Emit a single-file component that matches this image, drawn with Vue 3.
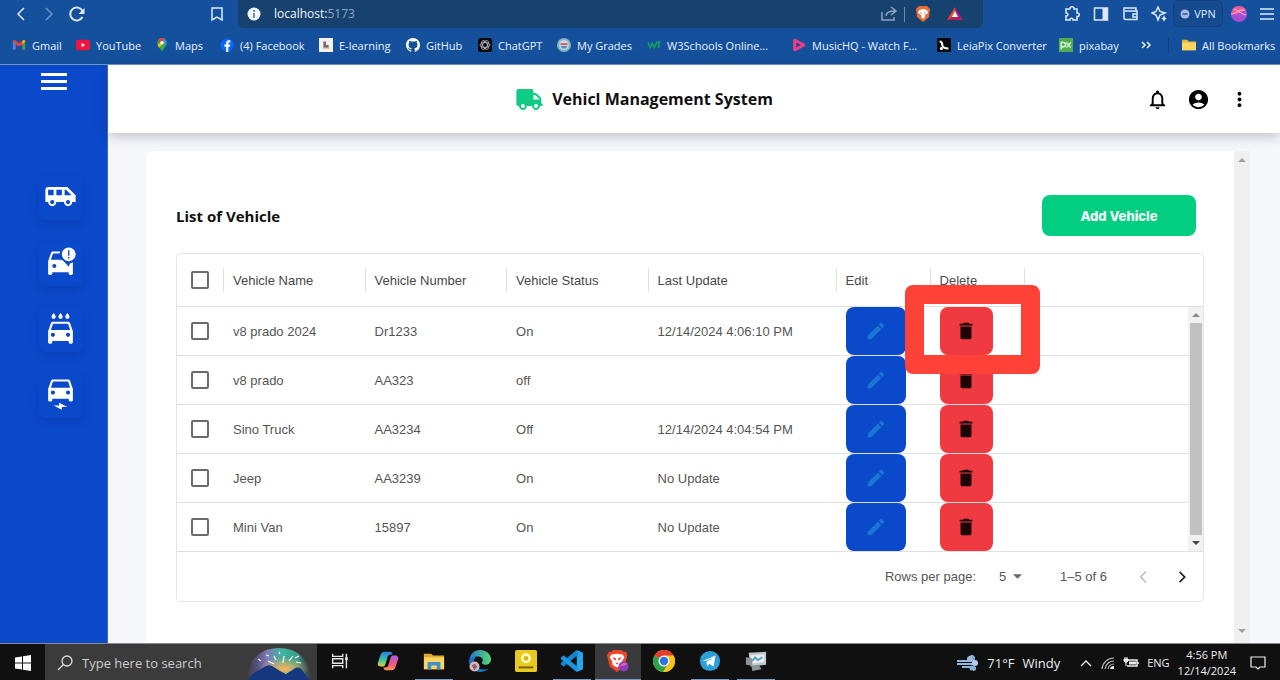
<script setup>
import { ref } from 'vue'

const bookmarks = [
  { label: 'Gmail', icon: '<path d="M1 3v10h3V7l4 3 4-3v6h3V3l-2-1-5 4-5-4z" fill="#ea4335"/><path d="M1 4v9h3V6z" fill="#4285f4"/><path d="M12 6v7h3V4z" fill="#34a853"/><path d="M12 3l2-1 1 2-3 3z" fill="#fbbc04"/>' },
  { label: 'YouTube', icon: '<rect x="0" y="2" width="16" height="12" rx="3" fill="#f0143c"/><path d="M6.500 5.500v5l4-2.500z" fill="#fff"/>' },
  { label: 'Maps', icon: '<path d="M8 0a5.500 5.500 0 0 0-5.500 5.500C2.500 9.500 6 11 8 16c2-5 5.500-6.500 5.500-10.500A5.500 5.500 0 0 0 8 0z" fill="#34a853"/><path d="M8 0a5.500 5.500 0 0 0-4.500 2.300L6.500 5 11 1c-1-.7-2-1-3-1z" fill="#ea4335"/><path d="M11 1L6 6l4 1 3.300-3C12.800 2.500 12 1.500 11 1z" fill="#4285f4"/><path d="M3 8l3-3 2 3-3.500 3z" fill="#fbbc04"/><circle cx="8" cy="5.500" r="2" fill="#fff"/>' },
  { label: '(4) Facebook', icon: '<circle cx="8" cy="8" r="7.500" fill="#0866ff"/><path d="M7 16v-6H5V7.500h2V6c0-2.200 1.200-3.300 3.300-3.300h1.500V5h-1.200C9.700 5 9.500 5.400 9.500 6.200v1.300h2.300l-.4 2.500H9.500v6z" fill="#fff"/>' },
  { label: 'E-learning', icon: '<path d="M0 0h16v16H0z" fill="#f4f2ee"/><path d="M5 4h3v4h3v3H5z" fill="#726b74"/><path d="M5 11h7v1H5z" fill="#c8a05a"/>' },
  { label: 'GitHub', icon: '<path fill="#fff" d="M8 0C3.580 0 0 3.580 0 8c0 3.540 2.290 6.530 5.470 7.590.4.070.55-.17.55-.38 0-.19-.01-.82-.01-1.490-2.010.37-2.530-.49-2.690-.94-.09-.23-.48-.94-.82-1.130-.28-.15-.68-.52-.01-.53.63-.01 1.080.58 1.230.82.72 1.210 1.870.87 2.330.66.070-.52.28-.87.51-1.070-1.780-.2-3.640-.89-3.640-3.950 0-.87.31-1.590.82-2.150-.08-.2-.36-1.020.08-2.120 0 0 .67-.21 2.200.82a7.600 7.600 0 0 1 4 0c1.530-1.040 2.200-.82 2.200-.82.44 1.100.16 1.920.08 2.120.51.56.82 1.270.82 2.150 0 3.070-1.870 3.750-3.650 3.950.29.25.54.73.54 1.480 0 1.070-.01 1.930-.01 2.200 0 .21.15.46.55.38A8 8 0 0 0 16 8c0-4.420-3.580-8-8-8z"/>' },
  { label: 'ChatGPT', icon: '<rect width="16" height="16" rx="3" fill="#080a10"/><g fill="none" stroke="#c9c9c9" stroke-width=".9"><ellipse cx="8" cy="8" rx="5.600" ry="2.700"/><ellipse cx="8" cy="8" rx="5.600" ry="2.700" transform="rotate(60 8 8)"/><ellipse cx="8" cy="8" rx="5.600" ry="2.700" transform="rotate(120 8 8)"/></g>' },
  { label: 'My Grades', icon: '<circle cx="8" cy="8" r="8" fill="#7fb7c9"/><circle cx="8" cy="8" r="5.500" fill="#d8d6dc"/><path d="M4 6h8v2H4z" fill="#c9566a"/><path d="M4 9h8l-2 3H6z" fill="#4f8fb5"/>' },
  { label: 'W3Schools Online...', icon: '<path d="M1 5l2.500 6L6 6l2.500 5L11 5M11 5l3.500-.5-1.500 3 1 2-2 1.500" fill="none" stroke="#139e62" stroke-width="1.800"/>' },
  { label: 'MusicHQ - Watch F...', icon: '<path d="M3 2.500v11L13.500 8z" fill="none" stroke="#ea3f86" stroke-width="3.400" stroke-linejoin="round"/><path d="M6 6v4l4-2z" fill="#5b2c87"/>' },
  { label: 'LeiaPix Converter', icon: '<rect width="16" height="16" rx="1" fill="#050608"/><path d="M3 4c3 0 3 2 3 4s2 4 7 4" fill="none" stroke="#fff" stroke-width="2.400"/><circle cx="5" cy="12" r="1.800" fill="#fff"/>' },
  { label: 'pixabay', icon: '<path d="M0 0h16v16H0z" fill="#4faf50"/><path d="M2.500 13V5H5a2.500 2.500 0 0 1 0 5H2.500M8.500 5l5 6M13.500 5l-5 6" fill="none" stroke="#e8ffe6" stroke-width="1.500"/>' }
]

const navItems = [
  { label: 'Vehicles', d: 'M17 5H3c-1.100 0-2 .89-2 2v9h2c0 1.650 1.340 3 3 3s3-1.350 3-3h5.500c0 1.650 1.340 3 3 3s3-1.350 3-3H23v-5l-6-6zM3 11V7h4v4H3zm3 6.500c-.83 0-1.500-.67-1.500-1.500s.67-1.500 1.500-1.500 1.500.67 1.500 1.500-.67 1.500-1.500 1.500zm7-6.500H9V7h4v4zm4.500 6.500c-.83 0-1.500-.67-1.500-1.500s.67-1.500 1.500-1.500 1.500.67 1.500 1.500-.67 1.500-1.500 1.500zM15 11V7h1l4 4h-5z' },
  { label: 'Accidents', d: 'M18 1c-2.760 0-5 2.240-5 5s2.240 5 5 5 5-2.240 5-5-2.240-5-5-5zm.5 8h-1V8h1v1zm0-2h-1V3h1v4zM12 4H6.500c-.66 0-1.210.42-1.420 1.010L3 11v9c0 .55.45 1 1 1h1c.55 0 1-.45 1-1v-1h12v1c0 .55.45 1 1 1h1c.55 0 1-.45 1-1v-8l-2 .6-1 2.400-4-4.200-2-.8H5l1.500-4.500h4.600L12 4zM7.500 16a1.500 1.500 0 1 1 0-3 1.500 1.500 0 0 1 0 3z' },
  { label: 'Car wash', d: 'M17 5c.83 0 1.500-.67 1.500-1.500 0-1-1.500-2.700-1.500-2.700s-1.500 1.700-1.500 2.700c0 .83.67 1.500 1.500 1.500zm-5 0c.83 0 1.500-.67 1.500-1.500 0-1-1.500-2.700-1.500-2.700s-1.500 1.700-1.500 2.700c0 .83.67 1.500 1.500 1.500zM7 5c.83 0 1.500-.67 1.500-1.500C8.500 2.500 7 .8 7 .8S5.500 2.500 5.500 3.500C5.500 4.330 6.170 5 7 5zm11.920 3.010C18.720 7.420 18.160 7 17.500 7h-11c-.66 0-1.210.42-1.420 1.010L3 14v8c0 .55.45 1 1 1h1c.55 0 1-.45 1-1v-1h12v1c0 .55.45 1 1 1h1c.55 0 1-.45 1-1v-8l-2.080-5.990zM6.500 18c-.83 0-1.500-.67-1.500-1.500S5.670 15 6.500 15s1.500.67 1.500 1.500S7.330 18 6.500 18zm11 0c-.83 0-1.500-.67-1.500-1.500s.67-1.500 1.500-1.500 1.500.67 1.500 1.500-.67 1.500-1.500 1.500zM5 13l1.500-4.500h11L19 13H5z' },
  { label: 'Electric cars', d: 'M18.920 2.010C18.720 1.420 18.160 1 17.500 1h-11c-.66 0-1.210.42-1.420 1.010L3 8v8c0 .55.45 1 1 1h1c.55 0 1-.45 1-1v-1h12v1c0 .55.45 1 1 1h1c.55 0 1-.45 1-1V8l-2.080-5.990zM6.500 12c-.83 0-1.500-.67-1.500-1.500S5.670 9 6.500 9 8 9.670 8 10.500 7.330 12 6.500 12zm11 0c-.83 0-1.500-.67-1.500-1.500S16.670 9 17.500 9s1.500.67 1.500 1.500-.67 1.500-1.500 1.500zM5 7l1.500-4.500h11L19 7H5zM7 20h4v-2l6 3h-4v2z' }
]

const columns = ['Vehicle Name', 'Vehicle Number', 'Vehicle Status', 'Last Update', 'Edit', 'Delete']
const vehicles = [
  { name: 'v8 prado 2024', number: 'Dr1233', status: 'On', updated: '12/14/2024 4:06:10 PM', marked: true },
  { name: 'v8 prado', number: 'AA323', status: 'off', updated: '' },
  { name: 'Sino Truck', number: 'AA3234', status: 'Off', updated: '12/14/2024 4:04:54 PM' },
  { name: 'Jeep', number: 'AA3239', status: 'On', updated: 'No Update' },
  { name: 'Mini Van', number: '15897', status: 'On', updated: 'No Update' }
]
const pageSize = ref(5)

const taskApps = [
  { label: 'Task view', icon: '<g fill="none" stroke="#e6e6e6" stroke-width="1.500"><path d="M4 4v3h11V4M4 20v-3h11v3M4 9.500h11v5H4zM19 4v16"/></g><path d="M17.500 8h3v3h-3z" fill="#e6e6e6"/>' },
  { label: 'Copilot', icon: '<defs><linearGradient id="cpa" x1="0" y1="0" x2="0" y2="1"><stop offset="0" stop-color="#2b7bea"/><stop offset=".6" stop-color="#3ecf9a"/><stop offset="1" stop-color="#f2c531"/></linearGradient><linearGradient id="cpb" x1="0" y1="0" x2="0" y2="1"><stop offset="0" stop-color="#b05be8"/><stop offset=".6" stop-color="#f0567f"/><stop offset="1" stop-color="#f79a4a"/></linearGradient></defs><path d="M8 2h6c2 0 2.500 1.500 3 3h-2c-2 0-3 1-3.500 3L9 16c-.5 1.500-1.500 2-3 2H4c-3 0-3.500-2-3-4l3-9c.7-2 2-3 4-3z" fill="url(#cpa)"/><path d="M16 22h-6c-2 0-2.500-1.500-3-3h2c2 0 3-1 3.500-3L15 8c.5-1.500 1.500-2 3-2h2c3 0 3.500 2 3 4l-3 9c-.7 2-2 3-4 3z" fill="url(#cpb)"/>' },
  { label: 'File Explorer', running: true, icon: '<path d="M1 4h8l2 2h12v15H1z" fill="#e0a92e"/><path d="M1 8h22v13H1z" fill="#fbd462"/><path d="M5 13h14v8h-4v-4H9v4H5z" fill="#3f8fc9"/>' },
  { label: 'Edge', icon: '<defs><linearGradient id="edg" x1="0" y1="0" x2="1" y2="0"><stop offset="0" stop-color="#1c78d4"/><stop offset="1" stop-color="#59d96c"/></linearGradient></defs><path d="M0 12C1 4 6 0 12 0c7 0 12 5 12 10 0 4-3 6-6 6-3 0-4-1-4-2s1-1 1-3c0-2-2-4-5-4C5 7 1 9 0 12z" fill="url(#edg)"/><path d="M0 12c1-3 4-5 8-5-2 2-3 4-3 7 1 5 6 8 13 7 2 0 3-1 4-2-2 3-6 5-10 5C5 24 0 18 0 12z" fill="#1674c8"/><circle cx="6" cy="18" r="5.500" fill="#d9b6b4"/><path d="M3 17l3-2 3 3-3 4z" fill="#8f5a68"/>' },
  { label: 'Player', icon: '<rect width="24" height="24" rx="2" fill="#e9c91c"/><circle cx="12" cy="9" r="5.500" fill="#fff6c4"/><circle cx="12" cy="9" r="2.500" fill="#d8b400"/><path d="M4 18h16v2H4z" fill="#6b5900"/>' },
  { label: 'Visual Studio Code', running: true, icon: '<path d="M17 0l7 3v18l-7 3z" fill="#28a4ec"/><path d="M17 0l2 5L3 18l-3-2v-2z" fill="#1685d0"/><path d="M17 24l2-5L3 6 0 8v2z" fill="#1b95dd"/><path d="M17 8v8l-5-4z" fill="#121212"/>' },
  { label: 'Brave', running: true, active: true, icon: '<path d="M7 0h9l2 2 3 0 1 4-3 12-8 6-8-6L0 6l2-4 3 0z" fill="#f0452b"/><path d="M5 5l6-1 6 1 2 3-3 5 0 3-5 3-5-3 0-3-3-5z" fill="#fff"/><path d="M6 8l4 1-1 3zM16 8l-4 1 1 3zM9 14h4l-2 2z" fill="#f0452b"/><circle cx="18" cy="18" r="5.500" fill="#8a3fc4"/><path d="M13 18l5-4 5 1-4 2z" fill="#ee5f9b"/>' },
  { label: 'Chrome', icon: '<circle cx="12" cy="12" r="12" fill="#fbc116"/><path d="M12 12L1.600 6A12 12 0 0 1 22.400 6z" fill="#e33b2e"/><path d="M12 12L1.600 6A12 12 0 0 0 11 24l6-10z" fill="#2ba24c"/><path d="M12 6h10.400A12 12 0 0 1 11 24l6.500-9z" fill="#fbc116"/><circle cx="12" cy="12" r="6" fill="#fff"/><circle cx="12" cy="12" r="4.600" fill="#2f73e0"/>' },
  { label: 'Telegram', running: true, icon: '<circle cx="12" cy="12" r="11" fill="#2c9fd8"/><path d="M4 12l14-6-2 12-5-3-2 3-1-5 8-5-9 4z" fill="#fff"/>' },
  { label: 'Device settings', running: true, icon: '<path d="M4 3l19-1v14l-17 2z" fill="#c3c8cc"/><path d="M6 6l15-1v8L8 15z" fill="#eceff1"/><path d="M8 12l3-4 3 3 5-3" stroke="#4b9fc6" stroke-width="2" fill="none"/><path d="M1 8l7 1v8l-7-1zM7 17l8-1 3 5-10 2z" fill="#8e959a"/>' }
]
</script>

<template>
  <div class="screen">
    <header class="browser">
      <div class="toolbar">
        <div class="nav-buttons">
          <button aria-label="Back"><svg class="i16" viewBox="0 0 16 16"><path class="line" d="M11 2L5 8l6 6" /></svg></button>
          <button class="faded" aria-label="Forward"><svg class="i16" viewBox="0 0 16 16"><path class="line" d="M5 2l6 6-6 6" /></svg></button>
          <button aria-label="Reload"><svg class="i16" viewBox="0 0 16 16"><path class="line bold" d="M13.500 11A6.500 6.500 0 1 1 13.500 5" /><path d="M15.500 2v6H9.500z" fill="currentColor" /></svg></button>
          <button class="save" aria-label="Bookmark this page"><svg class="i16" viewBox="0 0 16 16"><path class="line" d="M3 2h10v12l-5-3-5 3z" /></svg></button>
        </div>
        <div class="address">
          <svg class="i14" viewBox="0 0 14 14"><circle cx="7" cy="7" r="6.500" fill="#f3f8ff" /><path d="M7 6v5M7 3v2" stroke="#50709b" stroke-width="1.600" /></svg>
          <span class="url">localhost:<span class="port">5173</span></span>
          <button class="share" aria-label="Share"><svg class="i16" viewBox="0 0 16 16"><path class="line" d="M1 6v8h12v-3M5 10c0-4 3-5 9-5M10 1l5 4-5 4" /></svg></button>
          <i class="bar"></i>
          <button aria-label="Brave Shields"><svg class="i16" viewBox="0 0 16 16"><path d="M4 0h8l3 3-1 8-6 5-6-5-1-8z" fill="#ee6a36" /><path d="M4 4l4-1 4 1 1 3-3 2v2l-2 2-2-2V9L3 7z" fill="#fff" /><path d="M5 6l2 1-1 1zM11 6L9 7l1 1z" fill="#ee6a36" /></svg></button>
          <button class="bat" aria-label="Brave Rewards"><svg class="i16" viewBox="0 0 16 16"><path d="M8 1L0 14h8V9z" fill="#e84a2a" /><path d="M8 1l8 13H8z" fill="#9b2480" /><path d="M0 14h16l-5-3H5z" fill="#ba1c5c" /><path d="M8 5l3 6H5z" fill="#fff" /></svg></button>
        </div>
        <div class="tools">
          <button aria-label="Extensions"><svg class="i16" viewBox="0 0 16 16"><path class="line" d="M2 3h4c-.5-3 4.500-3 4 0h3v4c3-.5 3 4 0 3.500V14H9c.5-2.500-3.500-2.500-3 0H2v-4c2.500.5 2.500-3.500 0-3z" /></svg></button>
          <button aria-label="Sidebar"><svg class="i16" viewBox="0 0 16 16"><path class="line" d="M1.500 2h13v12h-13z" /><path d="M9.500 2h5v12h-5z" fill="currentColor" /></svg></button>
          <button aria-label="Wallet"><svg class="i16" viewBox="0 0 16 16"><path class="line" d="M14 5V2H2v10c0 1 .5 1.500 2 1.500h11V5H3M15 8h-4v3h4" /></svg></button>
          <button aria-label="Leo assistant"><svg class="i16" viewBox="0 0 16 16"><path class="line" d="M7 1l2 4.500L14 7 9 9l-2 5-2-5-4-2 4-1.500z" /><path d="M13 9l1 2.500 2 1-2 1-1 2.500-1-2.500-2-1 2-1z" fill="currentColor" /></svg></button>
          <button class="vpn"><svg class="i10" viewBox="0 0 10 10"><circle cx="5" cy="5" r="4.500" fill="#a9b9e0" /><path d="M2.500 5h5" stroke="#28518f" stroke-width="1.500" /></svg>VPN</button>
          <button class="profile" aria-label="Profile"><svg class="i16" viewBox="0 0 16 16"><circle cx="8" cy="8" r="8" fill="#a74dd4" /><path d="M.5 6A8 8 0 0 1 15 4L5 9z" fill="#ef5c91" /><path d="M0 8c5 0 8-5 14-4M3 3c4 1 5 4 12 6" stroke="#ffc0db" fill="none" /></svg></button>
          <button class="menu" aria-label="Browser menu"><svg class="i16" viewBox="0 0 16 16"><path class="line" d="M1 3h14M1 8h14M1 13h14" /></svg></button>
        </div>
      </div>
      <nav class="bookmarks" aria-label="Bookmarks">
        <a v-for="item in bookmarks" :key="item.label" href="#"><svg class="i14" viewBox="0 0 16 16" v-html="item.icon"></svg>{{ item.label }}</a>
        <button class="more" aria-label="More bookmarks"><svg class="i14" viewBox="0 0 14 14"><path class="line" d="M2 4l3 3-3 3M7 4l3 3-3 3" /></svg></button>
        <a class="all" href="#"><svg class="i14" viewBox="0 0 16 16"><path d="M0 2h6l2 2h8v10H0z" fill="#e9b53a" /><path d="M0 5h16v9H0z" fill="#ffd75e" /></svg>All Bookmarks</a>
      </nav>
    </header>

    <div class="app">
      <aside class="sidebar">
        <button class="burger" aria-label="Toggle menu"><svg viewBox="0 0 26 18"><path d="M0 0h26v3H0zM0 7h26v3H0zM0 14h26v3H0z" fill="currentColor" /></svg></button>
        <nav class="side-nav" aria-label="Main">
          <a v-for="item in navItems" :key="item.label" href="#" :aria-label="item.label"><svg viewBox="0 0 24 24"><path :d="item.d" fill="currentColor" fill-rule="evenodd" /></svg></a>
        </nav>
      </aside>

      <div class="page">
        <header class="topbar">
          <div class="brand">
            <svg viewBox="0 0 640 512"><path fill="#0fcb86" d="M624 352h-16V243.900c0-12.700-5.100-24.900-14.100-33.900L494 110.100c-9-9-21.200-14.100-33.900-14.100H416V48c0-26.500-21.500-48-48-48H48C21.500 0 0 21.500 0 48v320c0 26.500 21.500 48 48 48h16c0 53 43 96 96 96s96-43 96-96h128c0 53 43 96 96 96s96-43 96-96h48c8.800 0 16-7.200 16-16v-32c0-8.800-7.200-16-16-16zM160 464c-26.500 0-48-21.500-48-48s21.500-48 48-48 48 21.500 48 48-21.500 48-48 48zm320 0c-26.500 0-48-21.500-48-48s21.500-48 48-48 48 21.500 48 48-21.500 48-48 48zm80-208H416V144h44.100l99.900 99.900V256z" /></svg>
            <h1>Vehicl Management System</h1>
          </div>
          <div class="account">
            <button aria-label="Notifications"><svg viewBox="0 0 24 24"><path d="M12 22c1.100 0 2-.9 2-2h-4c0 1.100.9 2 2 2zm6-6v-5c0-3.070-1.630-5.640-4.500-6.320V4c0-.83-.67-1.500-1.500-1.500s-1.500.67-1.500 1.500v.68C7.640 5.360 6 7.920 6 11v5l-2 2v1h16v-1l-2-2zm-2 1H8v-6c0-2.480 1.510-4.500 4-4.500s4 2.020 4 4.500v6z" /></svg></button>
            <button aria-label="Account"><svg viewBox="0 0 24 24"><path d="M12 2C6.480 2 2 6.480 2 12s4.480 10 10 10 10-4.480 10-10S17.520 2 12 2zm0 4c1.930 0 3.500 1.570 3.500 3.500S13.930 13 12 13s-3.500-1.570-3.500-3.500S10.070 6 12 6zm0 14c-2.030 0-4.430-.82-6.140-2.880C7.550 15.800 9.680 15 12 15s4.450.8 6.140 2.120C16.430 19.180 14.030 20 12 20z" /></svg></button>
            <button aria-label="More options"><svg viewBox="0 0 24 24"><path d="M12 8c1.100 0 2-.9 2-2s-.9-2-2-2-2 .9-2 2 .9 2 2 2zm0 2c-1.100 0-2 .9-2 2s.9 2 2 2 2-.9 2-2-.9-2-2-2zm0 6c-1.100 0-2 .9-2 2s.9 2 2 2 2-.9 2-2-.9-2-2-2z" /></svg></button>
          </div>
        </header>

        <main class="content">
          <section class="card">
            <div class="card-head">
              <h2>List of Vehicle</h2>
              <button class="add">Add Vehicle</button>
            </div>

            <div class="grid">
              <div class="grid-body">
                <table>
                  <colgroup>
                    <col class="c-check"><col class="c-text"><col class="c-text"><col class="c-text"><col class="c-date"><col class="c-act"><col class="c-act"><col>
                  </colgroup>
                  <thead>
                    <tr>
                      <th><input type="checkbox" aria-label="Select all rows"></th>
                      <th v-for="c in columns" :key="c" scope="col"><span class="sep">{{ c }}</span></th>
                      <th><span class="sep end"></span></th>
                    </tr>
                  </thead>
                  <tbody>
                    <tr v-for="v in vehicles" :key="v.name">
                      <td><input type="checkbox" :aria-label="'Select ' + v.name"></td>
                      <td>{{ v.name }}</td>
                      <td>{{ v.number }}</td>
                      <td>{{ v.status }}</td>
                      <td>{{ v.updated }}</td>
                      <td><button class="edit" :aria-label="'Edit ' + v.name"><svg viewBox="0 0 24 24"><path d="M3 17.250V21h3.750L17.810 9.940l-3.750-3.750L3 17.250zM20.710 7.040c.39-.39.39-1.020 0-1.410l-2.340-2.340c-.39-.39-1.020-.39-1.410 0l-1.830 1.830 3.750 3.750 1.830-1.830z" /></svg></button></td>
                      <td class="delete-cell">
                        <button class="delete" :aria-label="'Delete ' + v.name"><svg viewBox="0 0 24 24"><path d="M6 19c0 1.100.9 2 2 2h8c1.100 0 2-.9 2-2V7H6v12zM19 4h-3.500l-1-1h-5l-1 1H5v2h14V4z" /></svg></button>
                        <i v-if="v.marked" class="marker"></i>
                      </td>
                      <td></td>
                    </tr>
                  </tbody>
                </table>
                <div class="rail">
                  <div class="rail-head"></div>
                  <div class="scroll">
                    <svg viewBox="0 0 8 8"><path d="M0 6l4-4 4 4z" fill="#8a8a8a" /></svg>
                    <div class="thumb"></div>
                    <svg viewBox="0 0 8 8"><path d="M0 2l4 4 4-4z" fill="#444" /></svg>
                  </div>
                </div>
              </div>
              <footer class="pager">
                <label for="page-size">Rows per page:</label>
                <span class="select">
                  <select id="page-size" v-model="pageSize"><option :value="5">5</option><option :value="10">10</option></select>
                  <svg viewBox="0 0 8 8"><path d="M0 2l4 4 4-4z" fill="#666" /></svg>
                </span>
                <span class="range">1–5 of 6</span>
                <button disabled aria-label="Previous page"><svg viewBox="0 0 24 24"><path d="M15.410 5.410L14 4l-8 8 8 8 1.410-1.410L8.830 12z" /></svg></button>
                <button aria-label="Next page"><svg viewBox="0 0 24 24"><path d="M8 6l1.600-1.600L17.200 12l-7.600 7.600L8 18l6-6z" /></svg></button>
              </footer>
            </div>
          </section>
          <div class="page-scroll">
            <svg viewBox="0 0 8 8"><path d="M0 6l4-4 4 4z" fill="#a0a0a0" /></svg>
            <svg viewBox="0 0 8 8"><path d="M0 2l4 4 4-4z" fill="#a0a0a0" /></svg>
          </div>
        </main>
      </div>
    </div>

    <footer class="taskbar">
      <button class="start" aria-label="Start"><svg class="i16" viewBox="0 0 16 16"><path d="M0 2.500L7 1.500v6H0zM8 1.300L16 0v7.500H8zM0 8.500h7v6l-7-1zM8 8.500h8V16l-8-1.300z" fill="#fff" /></svg></button>
      <label class="search">
        <svg class="i16" viewBox="0 0 16 16"><circle cx="10" cy="6" r="5" fill="none" stroke="#ddd" stroke-width="1.300" /><path d="M6.500 9.500L1 15" stroke="#ddd" stroke-width="1.300" /></svg>
        <input type="text" placeholder="Type here to search" aria-label="Search">
        <svg class="scene" viewBox="0 0 66 34">
          <defs>
            <linearGradient id="sky" x1="0" y1="0" x2="1" y2="0"><stop offset="0" stop-color="#4a4580" stop-opacity=".3" /><stop offset=".3" stop-color="#8078b8" /><stop offset=".55" stop-color="#3fb59c" /><stop offset=".8" stop-color="#3a9c8c" /><stop offset="1" stop-color="#3c4b55" stop-opacity=".3" /></linearGradient>
            <radialGradient id="glow"><stop offset="0" stop-color="#ffb35c" /><stop offset="1" stop-color="#ffb35c" stop-opacity="0" /></radialGradient>
          </defs>
          <path d="M2 34C0 14 14 1 33 1s33 13 31 33z" fill="url(#sky)" />
          <ellipse cx="38" cy="22" rx="25" ry="12" fill="url(#glow)" />
          <path d="M0 34l8-8 12-7c2-1 4-1 6 0l8 5 6 3 8-5c3-2 6-2 8 1l8 11z" fill="#15377f" />
          <path d="M12 12l3 2M20 8l3 1M30 13l-2-4M37 16l1-7M43 14l4-5M28 17l-6-3M49 11l4-2M50 15l5 1M33 5l1 2" stroke="#fff" stroke-width="1.200" />
        </svg>
      </label>
      <button v-for="a in taskApps" :key="a.label" class="task" :class="{ running: a.running, active: a.active }" :aria-label="a.label"><svg viewBox="0 0 24 24" v-html="a.icon"></svg></button>
      <div class="tray">
        <button class="weather"><svg viewBox="0 0 22 16"><path d="M0 6h14c4 0 4-5 1-5-2 0-2 1-2 2M0 9h19M5 12h11c3 0 3 3 0 3" fill="none" stroke="#8fb5dc" stroke-width="1.800" /><circle cx="13" cy="4" r="3" fill="#9dbce0" /><circle cx="18" cy="8" r="3" fill="#b8cfea" /><circle cx="15" cy="13" r="2.500" fill="#8fb0d6" /></svg><span>71°F</span><span>Windy</span></button>
        <button aria-label="Hidden icons"><svg class="i14" viewBox="0 0 14 14"><path d="M2 10l5-5 5 5" fill="none" stroke="#eee" stroke-width="1.400" /></svg></button>
        <button aria-label="Network"><svg class="i14" viewBox="0 0 14 14"><g fill="none" stroke="#bbb" stroke-width="1.200"><path d="M1 13A12 12 0 0 1 13 2M4 13a9 9 0 0 1 9-8M7 13a6 6 0 0 1 6-5" /></g><path d="M9 13a4 4 0 0 1 4-3v3z" fill="#eee" /></svg></button>
        <button aria-label="Battery"><svg class="i16" viewBox="0 0 16 14"><path d="M5 4h9v6H4M15 6v2" fill="none" stroke="#eee" stroke-width="1.400" /><path d="M6 5.500h7v3H6z" fill="#eee" /><path d="M1 3h4v2L3 6.500 1 5zM3 6v4M2 1v2M4 1v2" fill="#eee" stroke="#eee" /></svg></button>
        <button class="lang">ENG</button>
        <button class="clock"><span>4:56 PM</span><span>12/14/2024</span></button>
        <button class="notes" aria-label="Notifications"><svg class="i16" viewBox="0 0 16 16"><path d="M1 2h14v10h-5l-2 2-2-2H1z" fill="none" stroke="#eee" stroke-width="1.200" /></svg></button>
      </div>
    </footer>
  </div>
</template>

<style>
body { margin: 0; }
</style>

<style scoped>
.screen { min-height: 100vh; display: flex; flex-direction: column; font-family: "Open Sans", "Noto Sans", sans-serif; }
.screen, .screen * { box-sizing: border-box; }
button { border: 0; background: none; padding: 0; margin: 0; font: inherit; color: inherit; display: flex; align-items: center; justify-content: center; }
svg { display: block; flex: none; }
a { color: inherit; text-decoration: none; }
.i10 { width: 10px; height: 10px; }
.i14 { width: 14px; height: 14px; }
.i16 { width: 16px; height: 16px; }
.line { fill: none; stroke: currentColor; stroke-width: 1.5; }
.line.bold { stroke-width: 2; }

.browser { background: #14509b; color: #dceaff; border-bottom: 1px solid #6f96c6; }
.toolbar { display: flex; height: 28px; }
.toolbar button { height: 27px; }
.nav-buttons { width: 238px; padding: 0 7px; display: flex; }
.nav-buttons button { width: 28px; }
.nav-buttons .save { margin-left: auto; }
.faded { opacity: .45; }
.address { flex: 1; display: flex; align-items: center; background: #17426f; border-radius: 0 0 6px 6px; padding: 0 14px 0 9px; }
.url { margin-left: 13px; font-size: 12px; line-height: 16px; color: #f0f5fc; }
.port { color: #8ba4c4; }
.address .share { margin-left: auto; width: 30px; color: #8ba4c4; }
.bar { width: 1px; height: 15px; background: #6c88ab; }
.bar + button { width: 36px; }
.bat { width: 28px; }
.tools { width: 297px; display: flex; justify-content: flex-end; }
.tools button { width: 29px; }
.tools .vpn { width: 50px; gap: 4px; font-size: 11px; border: 1px solid #123f80; border-radius: 6px; background: #154a8f; }
.tools .profile { width: 31px; }
.tools .menu { width: 26px; }

.bookmarks {
  display: grid; align-items: center; height: 36px; padding: 0 0 2px 12px; font-size: 11px; white-space: nowrap; color: #eaf2ff;
  grid-template-columns: minmax(0, 64fr) minmax(0, 79fr) minmax(0, 65fr) minmax(0, 99fr) minmax(0, 87fr) minmax(0, 72fr) minmax(0, 79fr) minmax(0, 90fr) minmax(0, 145fr) minmax(0, 145fr) minmax(0, 122fr) minmax(0, 81fr) minmax(0, 28fr) minmax(0, 112fr);
}
.bookmarks a { display: flex; align-items: center; gap: 6px; }
.more { height: 16px; justify-content: flex-start; }
.bookmarks .all { border-left: 1px solid #0f3f7d; padding-left: 13px; }

.app { flex: 1; display: flex; }
.sidebar { width: 108px; background: #0b49cb; color: #fff; display: flex; flex-direction: column; align-items: center; padding-top: 8px; border-right: 1px solid #3c6cc9; }
.burger svg { width: 26px; height: 18px; }
.side-nav { display: flex; flex-direction: column; gap: 22px; padding: 85px 0 0 14px; }
.side-nav a { width: 44px; height: 44px; display: flex; justify-content: center; padding-top: 4px; border-radius: 6px; box-shadow: 0 4px 8px rgba(5, 30, 120, .22); }
.side-nav svg { width: 33px; height: 33px; }

.page { flex: 1; min-width: 0; display: flex; flex-direction: column; background: #f5f7fb; }
.topbar { height: 68px; background: #fff; display: grid; grid-template-columns: 1fr auto 1fr; align-items: center; padding-right: 29px; box-shadow: 0 3px 12px rgba(30, 30, 50, .26); }
.brand { grid-column: 2; display: flex; align-items: center; gap: 9px; padding-right: 70px; }
.brand svg { width: 27px; height: 21px; }
h1, h2 { margin: 0; font-size: 16px; line-height: 24px; font-weight: 700; color: #101010; white-space: nowrap; }
.account { display: flex; justify-content: flex-end; gap: 18px; color: #000; }
.account svg { width: 23px; height: 23px; fill: currentColor; }

.content { flex: 1; display: flex; padding: 18px 30px 0 38px; }
.card { flex: 1; min-width: 0; background: #fff; border-radius: 8px 0 0 0; padding: 44px 30px 41px; }
.card-head { display: flex; align-items: center; justify-content: space-between; padding-right: 8px; margin-bottom: 17px; }
.card-head h2 { font-size: 15px; }
.add { width: 154px; height: 41px; border-radius: 8px; background: #03cd80; color: #f4fff9; font: 800 13px/16px Inter, sans-serif; }

.grid { border: 1px solid #e6e6e6; border-radius: 4px; font-family: "Liberation Sans", Arial, sans-serif; font-size: 13px; color: #555; }
.grid-body { display: flex; }
table { flex: 1; min-width: 0; table-layout: fixed; border-collapse: separate; border-spacing: 0; width: 0; }
.c-check { width: 46px; }
.c-text { width: 14%; }
.c-date { width: 188px; }
.c-act { width: 94px; }
th { height: 53px; padding: 0; font-weight: 400; text-align: left; color: #484848; border-bottom: 1px solid #e0e0e0; white-space: nowrap; }
td { height: 49px; padding: 0 0 0 10px; border-bottom: 1px solid #e0e0e0; white-space: nowrap; }
tbody tr:last-child td { border-bottom: 0; height: 48px; }
.sep { display: flex; align-items: center; height: 24px; padding-left: 9px; border-left: 1px solid #e0e0e0; }
th:first-child, td:first-child { padding-left: 14px; }
input[type="checkbox"] { appearance: none; display: block; width: 18px; height: 18px; margin: 0; border: 2px solid #6b6b6b; border-radius: 2px; background: #fff; }
input[type="checkbox"]:checked { background: #1976d2; border-color: #1976d2; }
.edit, .delete { height: 48px; border-radius: 8px; }
.edit { width: 60px; background: #0b49cb; }
.delete { width: 53px; background: #ef3a42; }
.edit svg, .delete svg { width: 22px; height: 22px; }
.edit svg { fill: #1976d2; }
.delete svg { fill: #1c0507; }
.delete-cell { position: relative; }
.marker { position: absolute; z-index: 2; left: -25px; top: -22px; width: 135px; height: 89px; border: 19px solid #ff4238; border-radius: 8px; pointer-events: none; }
.rail { width: 15px; display: flex; flex-direction: column; }
.rail-head { height: 53px; border-bottom: 1px solid #e0e0e0; }
.scroll { flex: 1; background: #f1f1f1; display: flex; flex-direction: column; align-items: center; gap: 4px; padding: 4px 0; }
.scroll svg, .page-scroll svg { width: 8px; height: 8px; }
.thumb { flex: 1; width: 12px; background: #c1c1c1; }
.pager { height: 50px; border-top: 1px solid #e0e0e0; display: flex; align-items: center; justify-content: flex-end; padding-right: 8px; }
.pager label { margin-right: 23px; font-size: 13px; }
.pager label, .range { font-size: 13px; }
.select { display: flex; align-items: center; gap: 6px; margin-right: 38px; }
.select svg { width: 9px; height: 9px; }
select { appearance: none; width: 8px; border: 0; background: none; padding: 0; margin: 0; font: inherit; color: inherit; }
.range { margin-right: 24px; }
.pager button { width: 26px; height: 26px; }
.pager button + button { margin-left: 12px; }
.pager button svg { width: 18px; height: 18px; fill: #222; }
.pager button:disabled svg { fill: #bbb; }
.page-scroll { width: 16px; background: #f0f0f1; display: flex; flex-direction: column; align-items: center; justify-content: space-between; padding: 5px 0 8px; }

.taskbar { height: 38px; background: #101011; color: #eee; display: flex; border-top: 1px solid #8a8a8c; }
.taskbar button { height: 37px; flex: none; }
.start { width: 45px; }
.search { flex: none; width: 272px; background: #3b3b3c; display: flex; align-items: center; padding-left: 12px; }
.search input { flex: 1; min-width: 0; border: 0; background: none; padding: 0 0 0 9px; font: 13px/18px "Open Sans", "Noto Sans", sans-serif; color: #ddd; }
.search input::placeholder { color: #ccc; opacity: 1; }
.scene { width: 66px; height: 34px; align-self: flex-end; margin-right: 5px; }
.task { width: 46px; border-bottom: 3px solid transparent; }
.search + .task { margin-right: 2px; }
.task svg { width: 22px; height: 22px; }
.task.running { border-bottom: 0; padding-bottom: 3px; background: linear-gradient(#6f9fc8, #6f9fc8) center bottom / 38px 2px no-repeat; }
.task.active { background: linear-gradient(#6f9fc8, #6f9fc8) center bottom / 46px 2px no-repeat #3a3a3c; }
.tray { margin-left: auto; display: flex; font-size: 12px; line-height: 16px; }
.weather { gap: 8px; margin-right: 15px; font-size: 13px; }
.weather svg { width: 22px; height: 16px; }
.tray .i14, .tray .i16 { margin: 0 4px; }
.lang { font-size: 11px; margin: 0 8px 0 4px; }
.clock { flex-direction: column; font-size: 11px; }
.notes { width: 44px; }
.tray .weather { margin-right: 15px; }
.tray .lang { margin: 0 8px 0 4px; }
</style>
